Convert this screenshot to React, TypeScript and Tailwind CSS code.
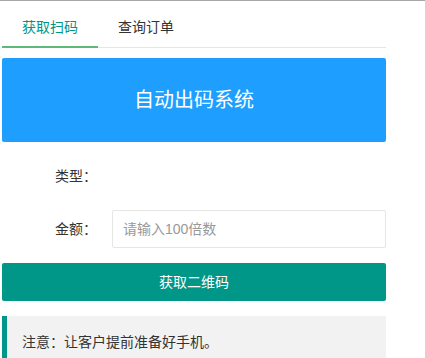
const FONT = "font-['Liberation_Sans','Noto_Sans_CJK_SC',sans-serif]"

function Tabs() {
  return (
    <div className="mt-[6px] flex h-[41px] border-b border-[#e6e6e6]">
      <div className="relative px-5 text-sm leading-[40px] text-[#009688]">
        获取扫码
        <div className="absolute bottom-[-1px] left-0 right-0 h-[2px] bg-[#5FB878]" />
      </div>
      <div className="px-5 text-sm leading-[40px] text-[#333]">查询订单</div>
    </div>
  )
}

function FormRow({ label, children }: { label: string; children?: React.ReactNode }) {
  return (
    <div className="mb-[15px] flex h-[38px]">
      <label className="w-[110px] shrink-0 py-[9px] pr-[15px] text-right text-sm leading-5 text-[#333]">
        {label}
      </label>
      <div className="flex-1">{children}</div>
    </div>
  )
}

export default function App() {
  return (
    <div className={`${FONT} min-h-[358px] bg-white`}>
      <div className="h-px bg-[#a8a8a8]" />
      <div className="ml-[2px] w-[384px]">
        <Tabs />

        <div className="mt-[10px] flex h-[84px] items-center justify-center rounded-[2px] bg-[#1E9FFF] text-xl text-white">
          自动出码系统
        </div>

        <div className="mt-[15px]">
          <FormRow label="类型：" />
          <FormRow label="金额：">
            <input
              type="text"
              placeholder="请输入100倍数"
              className="h-[38px] w-full rounded-[2px] border border-[#e6e6e6] bg-white pl-[10px] text-sm text-[#333] outline-none placeholder:text-[#999]"
            />
          </FormRow>
        </div>

        <button className="h-[38px] w-full rounded-[2px] bg-[#009688] text-sm text-white">
          获取二维码
        </button>

        <div className="mt-[15px] border-l-[5px] border-[#009688] bg-[#f2f2f2] p-[15px] text-sm leading-[22px] text-[#333]">
          注意：让客户提前准备好手机。
        </div>
      </div>
    </div>
  )
}
